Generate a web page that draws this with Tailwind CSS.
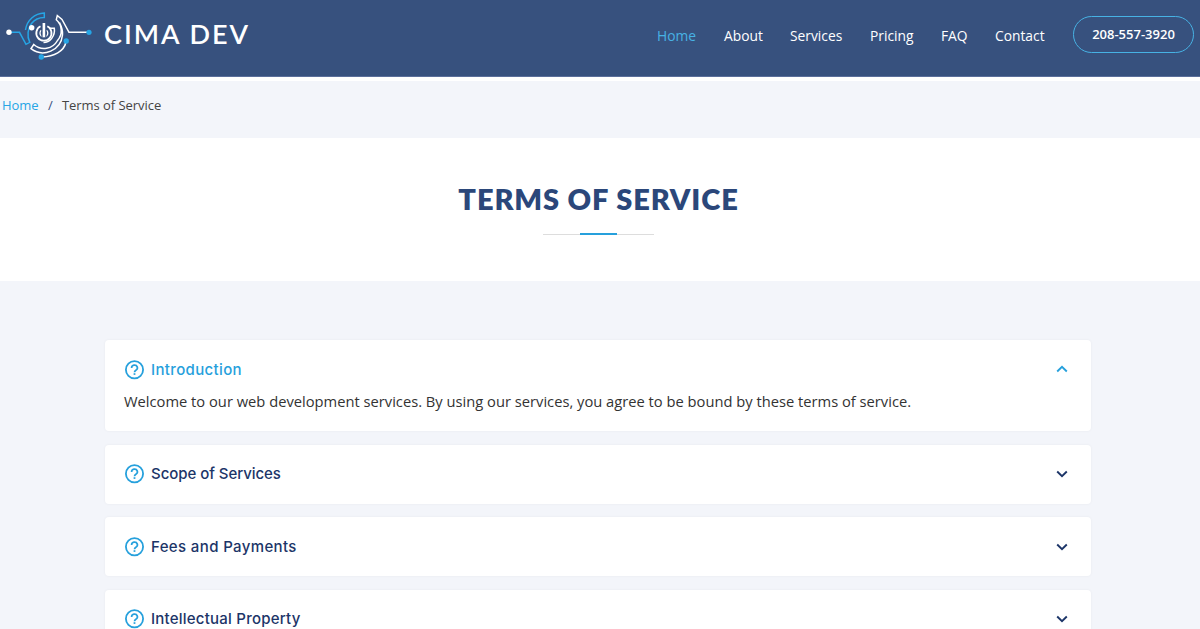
<!DOCTYPE html>
<html lang="en">
<head>
<meta charset="utf-8">
<title>Terms of Service - CIMA DEV</title>
<script src="https://cdn.jsdelivr.net/npm/@tailwindcss/browser@4"></script>
</head>
<body class="h-[629px] overflow-hidden bg-[#f3f5fa] font-['Open_Sans',sans-serif] text-[#444444]">
<svg class="hidden">
  <symbol id="help" viewBox="0 0 20 20"><g fill="none" stroke="currentColor"><circle cx="10.500" cy="9.700" r="8.600" stroke-width="1.800"/><path d="M7.600 7.900a2.900 2.700 0 1 1 4.300 2.300C10.800 10.900 10.500 11.300 10.500 12.200" stroke-width="1.700"/><path d="M10.500 13.200v1.700" stroke-width="1.800"/></g></symbol>
  <symbol id="down" viewBox="0 0 12 8"><path d="M1.200 1.500 6 6.100l4.800-4.600" fill="none" stroke="currentColor" stroke-width="1.900"/></symbol>
</svg>
<header class="flex h-[77px] items-start border-b border-[#5b6f9b] bg-[#37517e]">
  <svg class="h-[76px] w-[104px] shrink-0" viewBox="0 0 104 76" fill="none" stroke-width="1.500">
    <path stroke="#26a5e5" d="M11 32.300H19.500L26 44.300 29.800 42.300C26.500 36 28 28 31.500 23.500A16 16 0 0 1 44.300 17.500V12.900A19.500 19.500 0 0 0 25.500 30"/>
    <g stroke="#fff">
      <path d="M88 32.300H69L62 19.500 57.300 15.500 56.300 19.700A14.700 14.700 0 0 1 57.500 40.500A15.300 15.300 0 0 1 33.800 44.500L31 48.700A19.700 19.700 0 0 0 62.500 35C63 31 61.500 26.500 59.500 22.500"/>
      <path d="M40.500 26.300a7.600 7.600 0 1 0 6.800 0" stroke-width="1.800"/>
      <path d="M41.300 30.300a3.900 3.900 0 1 0 5.200 0" stroke-width="1.300"/>
      <path d="M49 28.200H54.300C55.500 36.500 49.500 42.500 43.500 42.500"/>
    </g>
    <path d="M43.900 22.500v15" stroke="#37517e" stroke-width="5"/>
    <path d="M43.900 23v14" stroke="#fff" stroke-width="2.600"/>
    <path d="M42 57C54 56.500 64 51.500 66 42" stroke="#fff"/>
    <circle cx="9" cy="32.300" r="2.700" fill="#fff"/><circle cx="31.700" cy="27.700" r="2.700" fill="#fff"/>
    <circle cx="89" cy="32.300" r="2.600" fill="#26a5e5"/><circle cx="66.200" cy="41" r="2.700" fill="#26a5e5"/><circle cx="41.300" cy="57" r="2.700" fill="#26a5e5"/>
  </svg>
  <div class="mt-[16px] w-[553px] whitespace-nowrap font-[Lato,sans-serif] text-[27px]/[36px] font-semibold tracking-[2px] text-white">CIMA DEV</div>
  <nav class="mt-[25px] flex w-[416px] shrink-0 text-[13.8px]/[21px] font-medium text-white">
    <a class="w-[67px] text-[#47b2e4]">Home</a><a class="w-[66px]">About</a><a class="w-[80px]">Services</a><a class="w-[71px]">Pricing</a><a class="w-[54px]">FAQ</a><a>Contact</a>
  </nav>
  <a class="mt-4 flex h-[37px] w-[121px] shrink-0 items-center justify-center rounded-full border border-[#47b2e4] text-[13px] font-semibold text-white">208-557-3920</a>
</header>
<main>
  <div class="border-t-4 border-white">
    <ol class="flex h-[57px] items-start pt-[14px] pl-[2px] text-[13px]/[20px] tracking-[-0.05px]">
      <li class="w-[46px] text-[#26a5e5]">Home</li><li class="w-[14px] text-[#37517e]">/</li><li>Terms of Service</li>
    </ol>
  </div>
  <section class="flex h-[143px] flex-col items-center bg-white pt-[43px]">
    <h2 class="mr-[3px] whitespace-nowrap font-[Lato,sans-serif] text-[29px]/[36px] font-extrabold tracking-[0.88px] text-[#2b477a]">TERMS OF SERVICE</h2>
    <div class="mt-[16px] mr-[3px] flex w-[111px] items-center justify-center bg-[linear-gradient(#ddd,#ddd)] bg-[length:100%_1px] bg-center bg-no-repeat"><span class="h-[2px] w-[37px] bg-[#26a0dc]"></span></div>
  </section>
  <section class="ml-[105px] flex w-[986px] flex-col gap-[13.7px] pt-[59.400px] font-[Inter,sans-serif] text-[15px]/[24px] font-medium text-[#1c3568]">
    <div class="h-[90.500px] shrink-0 rounded-[4px] bg-white px-[19px] pt-[17.600px] shadow-[0_0_3px_rgba(0,0,0,0.05)]">
      <div class="flex items-center text-[#26a0dc]"><svg class="mr-[7px] size-5"><use href="#help"/></svg><span class="tracking-[0.35px]">Introduction</span><svg class="mr-[4px] ml-auto h-2 w-3 -translate-y-px rotate-180"><use href="#down"/></svg></div>
      <p class="mt-[7px] whitespace-nowrap font-['Open_Sans',sans-serif] text-[14.71px]/[24px] font-normal text-[#333]">Welcome to our web development services. By using our services, you agree to be bound by these terms of service.</p>
    </div>
    <div class="flex h-[59px] shrink-0 items-center rounded-[4px] bg-white px-[19px] shadow-[0_0_3px_rgba(0,0,0,0.05)]"><svg class="mr-[7px] size-5 text-[#26a0dc]"><use href="#help"/></svg><span class="tracking-[-0.05px]">Scope of Services</span><svg class="mr-[4px] ml-auto h-2 w-3"><use href="#down"/></svg></div>
    <div class="flex h-[59px] shrink-0 items-center rounded-[4px] bg-white px-[19px] shadow-[0_0_3px_rgba(0,0,0,0.05)]"><svg class="mr-[7px] size-5 text-[#26a0dc]"><use href="#help"/></svg><span class="tracking-[0.37px]">Fees and Payments</span><svg class="mr-[4px] ml-auto h-2 w-3"><use href="#down"/></svg></div>
    <div class="flex h-[59px] shrink-0 items-center rounded-[4px] bg-white px-[19px] shadow-[0_0_3px_rgba(0,0,0,0.05)]"><svg class="mr-[7px] size-5 text-[#26a0dc]"><use href="#help"/></svg><span class="tracking-[0.23px]">Intellectual Property</span><svg class="mr-[4px] ml-auto h-2 w-3"><use href="#down"/></svg></div>
  </section>
</main>
</body>
</html>
